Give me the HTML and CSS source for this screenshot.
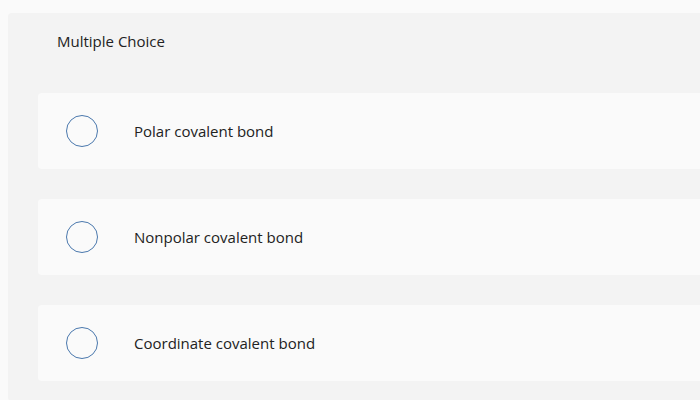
FILE: index.html
```html
<!DOCTYPE html>
<html>
<head>
<meta charset="utf-8">
<link rel="stylesheet" href="styles.css">
</head>
<body>
<div class="wrap">
  <div class="panel">
    <div class="header">Multiple Choice</div>
    <div class="choices">
      <div class="choice"><span class="radio"></span><span class="label">Polar covalent bond</span></div>
      <div class="choice"><span class="radio"></span><span class="label">Nonpolar covalent bond</span></div>
      <div class="choice"><span class="radio"></span><span class="label">Coordinate covalent bond</span></div>
    </div>
  </div>
</div>
</body>
</html>
```

FILE: styles.css
```css
html, body {
  margin: 0;
  padding: 0;
  background: #fafafa;
  overflow: hidden;
  font-family: "Open Sans", Lato, Arial, sans-serif;
  color: #222;
}
.wrap {
  padding: 13px 0 0 8px;
  width: 800px;
}
.panel {
  background: #f3f3f3;
  border-radius: 4px;
  padding-bottom: 20px;
}
.header {
  height: 57px;
  display: flex;
  align-items: center;
  padding-left: 49px;
  font-size: 15px;
  box-sizing: border-box;
  padding-bottom: 1px;
}
.choices {
  padding: 23px 0 0 30px;
  display: flex;
  flex-direction: column;
  gap: 30px;
}
.choice {
  height: 76px;
  background: #fafafa;
  border-radius: 4px;
  display: flex;
  align-items: center;
  padding-left: 28px;
  gap: 36px;
}
.radio {
  width: 30px;
  height: 30px;
  border: 1.6px solid #4a78ad;
  border-radius: 50%;
  flex: none;
}
.label {
  font-size: 15px;
  color: #222;
}
```
